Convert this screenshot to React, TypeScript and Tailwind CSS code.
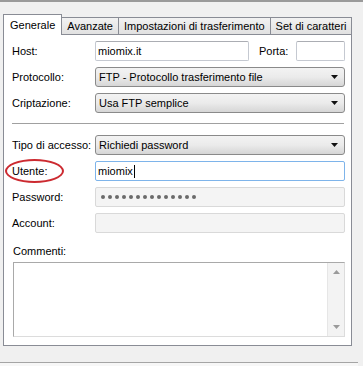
const font = { fontFamily: '"Liberation Sans", Arial, sans-serif' }

const Arrow = () => (
  <svg width="7" height="4" viewBox="0 0 7 4" className="shrink-0">
    <path d="M0 0h7L3.5 4z" fill="#111" />
  </svg>
)

const Select = ({ value }: { value: string }) => (
  <div className="flex-1 h-[20px] flex items-center justify-between pl-[3px] pr-[6px] rounded-[3px] border border-[#8a8a8a] bg-gradient-to-b from-[#f3f3f3] via-[#ebebeb] to-[#d6d6d6]">
    <span>{value}</span>
    <Arrow />
  </div>
)

const Row = ({ label, children }: { label: string; children: React.ReactNode }) => (
  <div className="flex items-center h-[20px]">
    <div className="w-[83px] shrink-0">{label}</div>
    {children}
  </div>
)

const Tab = ({ label, active }: { label: string; active?: boolean }) =>
  active ? (
    <div className="h-[21px] px-[6px] flex items-center border border-b-0 border-[#898c95] bg-white relative z-10 -mb-px">
      {label}
    </div>
  ) : (
    <div className="h-[17px] mt-[4px] px-[5px] flex items-center border border-l-0 border-b-0 border-[#898c95] bg-gradient-to-b from-[#f2f2f2] to-[#e1e1e1]">
      {label}
    </div>
  )

export default function App() {
  return (
    <div
      className="w-[363px] h-[366px] bg-[#f0f0f0] border-t-2 border-[#9a9a9a] text-[11px] text-black overflow-hidden flex flex-col"
      style={font}
    >
      <div className="flex items-end pl-[3px] mt-[11px]">
        <Tab label="Generale" active />
        <Tab label="Avanzate" />
        <Tab label="Impostazioni di trasferimento" />
        <Tab label="Set di caratteri" />
      </div>

      <div className="ml-[3px] w-[349px] h-[312px] border border-[#898c95] bg-white pt-[6px] pl-[8px] pr-[6px] flex flex-col">
        <div className="flex flex-col gap-[6px]">
          <Row label="Host:">
            <div className="w-[154px] h-[20px] flex items-center px-[2px] border border-[#c5c9d1] border-t-[#abadb3] rounded-[2px]">
              miomix.it
            </div>
            <div className="ml-[10px] w-[37px]">Porta:</div>
            <div className="flex-1 h-[20px] border border-[#c5c9d1] border-t-[#abadb3] rounded-[2px]" />
          </Row>
          <Row label="Protocollo:">
            <Select value="FTP - Protocollo trasferimento file" />
          </Row>
          <Row label="Criptazione:">
            <Select value="Usa FTP semplice" />
          </Row>
        </div>

        <div className="mt-[10px] mb-[11px] h-px bg-[#a0a0a0] mr-px" />

        <div className="flex flex-col gap-[6px]">
          <Row label="Tipo di accesso:">
            <Select value="Richiedi password" />
          </Row>
          <div className="relative">
            <Row label="Utente:">
              <div className="flex-1 h-[20px] flex items-center px-[2px] border border-[#7eb4ea] rounded-[2px]">
                miomix<span className="w-px h-[13px] bg-black ml-px" />
              </div>
            </Row>
            <div className="absolute left-[-7px] top-[-2px] w-[59px] h-[24px] rounded-[50%] border-2 border-[#cc2a30]" />
          </div>
          <Row label="Password:">
            <div className="flex-1 h-[20px] flex items-center pl-[5px] gap-[3px] bg-[#f4f4f4] border border-[#d9d9d9] rounded-[2px]">
              {Array.from({ length: 14 }).map((_, i) => (
                <span key={i} className="w-[4px] h-[4px] rounded-full bg-[#6a6a6a]" />
              ))}
            </div>
          </Row>
          <Row label="Account:">
            <div className="flex-1 h-[20px] bg-[#f4f4f4] border border-[#d9d9d9] rounded-[2px]" />
          </Row>
        </div>

        <div className="mt-[11px] h-[14px] flex items-center pl-px">Commenti:</div>
        <div className="mt-[4px] h-[75px] ml-px flex border border-[#a9a9a9] border-r-[#dcdcdc] border-b-[#dcdcdc]">
          <div className="flex-1" />
          <div className="w-[17px] bg-[#f3f3f3] border-l border-[#e6e6e6] flex flex-col items-center justify-between py-[7px]">
            <svg width="7" height="4" viewBox="0 0 7 4"><path d="M0 4h7L3.5 0z" fill="#9a9a9a" /></svg>
            <svg width="7" height="4" viewBox="0 0 7 4"><path d="M0 0h7L3.5 4z" fill="#9a9a9a" /></svg>
          </div>
        </div>
      </div>

      <div className="mt-[16px] w-[358px] h-px bg-[#a5a5a5]" />
      <div className="flex-1 w-[358px] bg-[#f7f7f7]" />
    </div>
  )
}
